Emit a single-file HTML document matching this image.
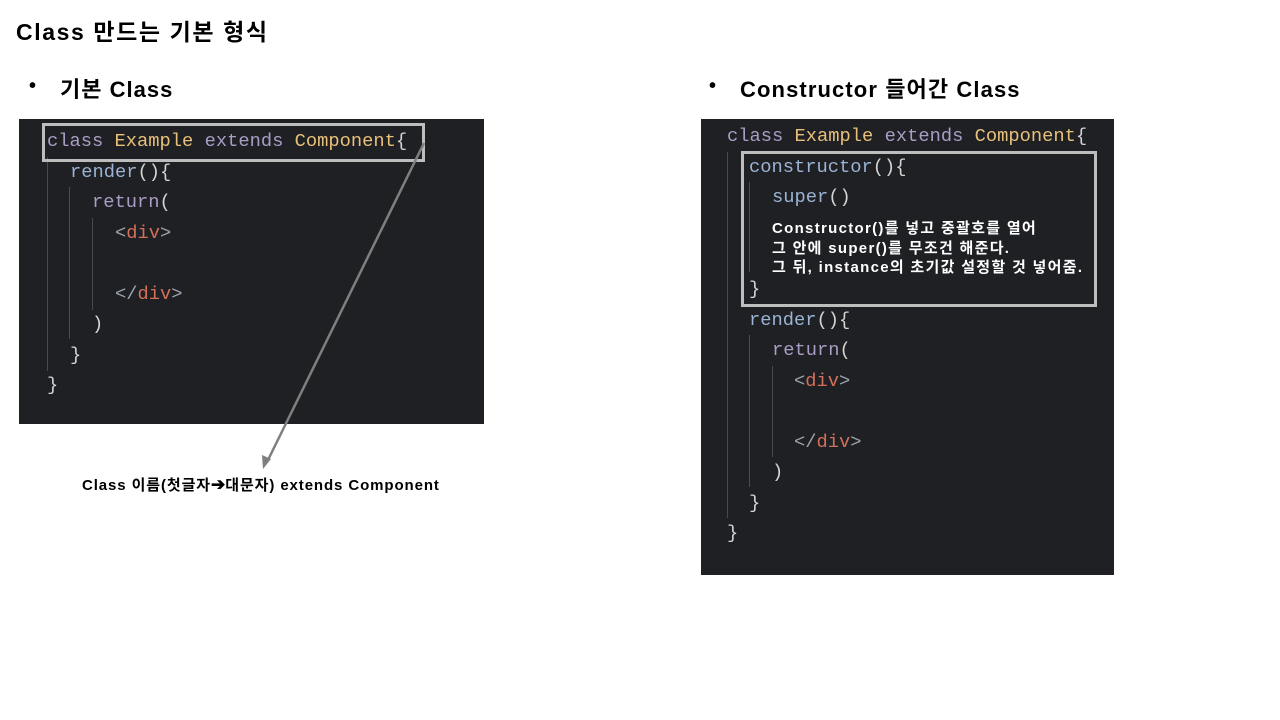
<!DOCTYPE html>
<html><head><meta charset="utf-8"><style>
body{margin:0;width:1280px;height:720px;background:#fff;position:relative;overflow:hidden;font-family:"Liberation Sans","Noto Sans CJK KR",sans-serif}
.a{position:absolute;white-space:pre}
.h{font-weight:bold;color:#000}
.p{position:absolute;background:#1f2023}
.c{position:absolute;white-space:pre;font-family:"Liberation Mono","DejaVu Sans Mono",monospace;font-size:18.75px;line-height:22px;color:#d4d4d4}
.k{color:#a99dc6}.y{color:#e8c07a}.b{color:#9bb3d4}.r{color:#d2705a}.g{color:#9aa3ad}
.v{position:absolute;width:1px;background:#4a4b4e}
.box{position:absolute;border:3px solid #bdbdbd;box-sizing:border-box}
</style></head><body>
<div class="a h" style="left:16px;top:13px;font-size:23px;letter-spacing:1.6px">Class 만드는 기본 형식</div>
<div class="a h" style="left:29px;top:75px;font-size:20px">•</div>
<div class="a h" style="left:60px;top:72px;font-size:22px;letter-spacing:1px">기본 Class</div>
<div class="a h" style="left:709px;top:75px;font-size:20px">•</div>
<div class="a h" style="left:740px;top:72px;font-size:22px;letter-spacing:1.1px">Constructor 들어간 Class</div>

<div class="p" style="left:19px;top:119px;width:465px;height:305px"></div>
<div class="v" style="left:47px;top:157px;height:214px"></div>
<div class="v" style="left:69px;top:187px;height:152px"></div>
<div class="v" style="left:92px;top:218px;height:92px"></div>
<div class="c" style="left:47px;top:130px"><span class="k">class</span> <span class="y">Example</span> <span class="k">extends</span> <span class="y">Component</span>{</div>
<div class="c" style="left:70px;top:161px"><span class="b">render</span>(){</div>
<div class="c" style="left:92px;top:191px"><span class="k">return</span>(</div>
<div class="c" style="left:115px;top:222px"><span class="g">&lt;</span><span class="r">div</span><span class="g">&gt;</span></div>
<div class="c" style="left:115px;top:283px"><span class="g">&lt;/</span><span class="r">div</span><span class="g">&gt;</span></div>
<div class="c" style="left:92px;top:313px">)</div>
<div class="c" style="left:70px;top:344px">}</div>
<div class="c" style="left:47px;top:374px">}</div>
<div class="box" style="left:42px;top:123px;width:383px;height:39px"></div>
<svg class="a" style="left:0;top:0" width="1280" height="720"><line x1="424" y1="143" x2="267" y2="462" stroke="#7f7f7f" stroke-width="2.5"/><polygon points="263,469 262,455 271,459" fill="#7f7f7f"/></svg>
<div class="a h" style="left:82px;top:474px;font-size:15px;letter-spacing:0.9px">Class 이름(첫글자<span style="font-size:17px;letter-spacing:0">➔</span>대문자) extends Component</div>

<div class="p" style="left:701px;top:119px;width:413px;height:456px"></div>
<div class="v" style="left:727px;top:152px;height:366px"></div>
<div class="v" style="left:749px;top:182px;height:90px"></div>
<div class="v" style="left:749px;top:335px;height:152px"></div>
<div class="v" style="left:772px;top:366px;height:91px"></div>
<div class="c" style="left:727px;top:125px"><span class="k">class</span> <span class="y">Example</span> <span class="k">extends</span> <span class="y">Component</span>{</div>
<div class="c" style="left:749px;top:156px"><span class="b">constructor</span>(){</div>
<div class="c" style="left:772px;top:186px"><span class="b">super</span>()</div>
<div class="a" style="left:772px;top:219px;font-size:15px;line-height:19.5px;font-weight:bold;color:#fff;letter-spacing:1.3px">Constructor()를 넣고 중괄호를 열어
그 안에 super()를 무조건 해준다.
그 뒤, instance의 초기값 설정할 것 넣어줌.</div>
<div class="c" style="left:749px;top:278px">}</div>
<div class="c" style="left:749px;top:309px"><span class="b">render</span>(){</div>
<div class="c" style="left:772px;top:339px"><span class="k">return</span>(</div>
<div class="c" style="left:794px;top:370px"><span class="g">&lt;</span><span class="r">div</span><span class="g">&gt;</span></div>
<div class="c" style="left:794px;top:431px"><span class="g">&lt;/</span><span class="r">div</span><span class="g">&gt;</span></div>
<div class="c" style="left:772px;top:461px">)</div>
<div class="c" style="left:749px;top:492px">}</div>
<div class="c" style="left:727px;top:522px">}</div>
<div class="box" style="left:741px;top:151px;width:356px;height:156px"></div>
</body></html>
